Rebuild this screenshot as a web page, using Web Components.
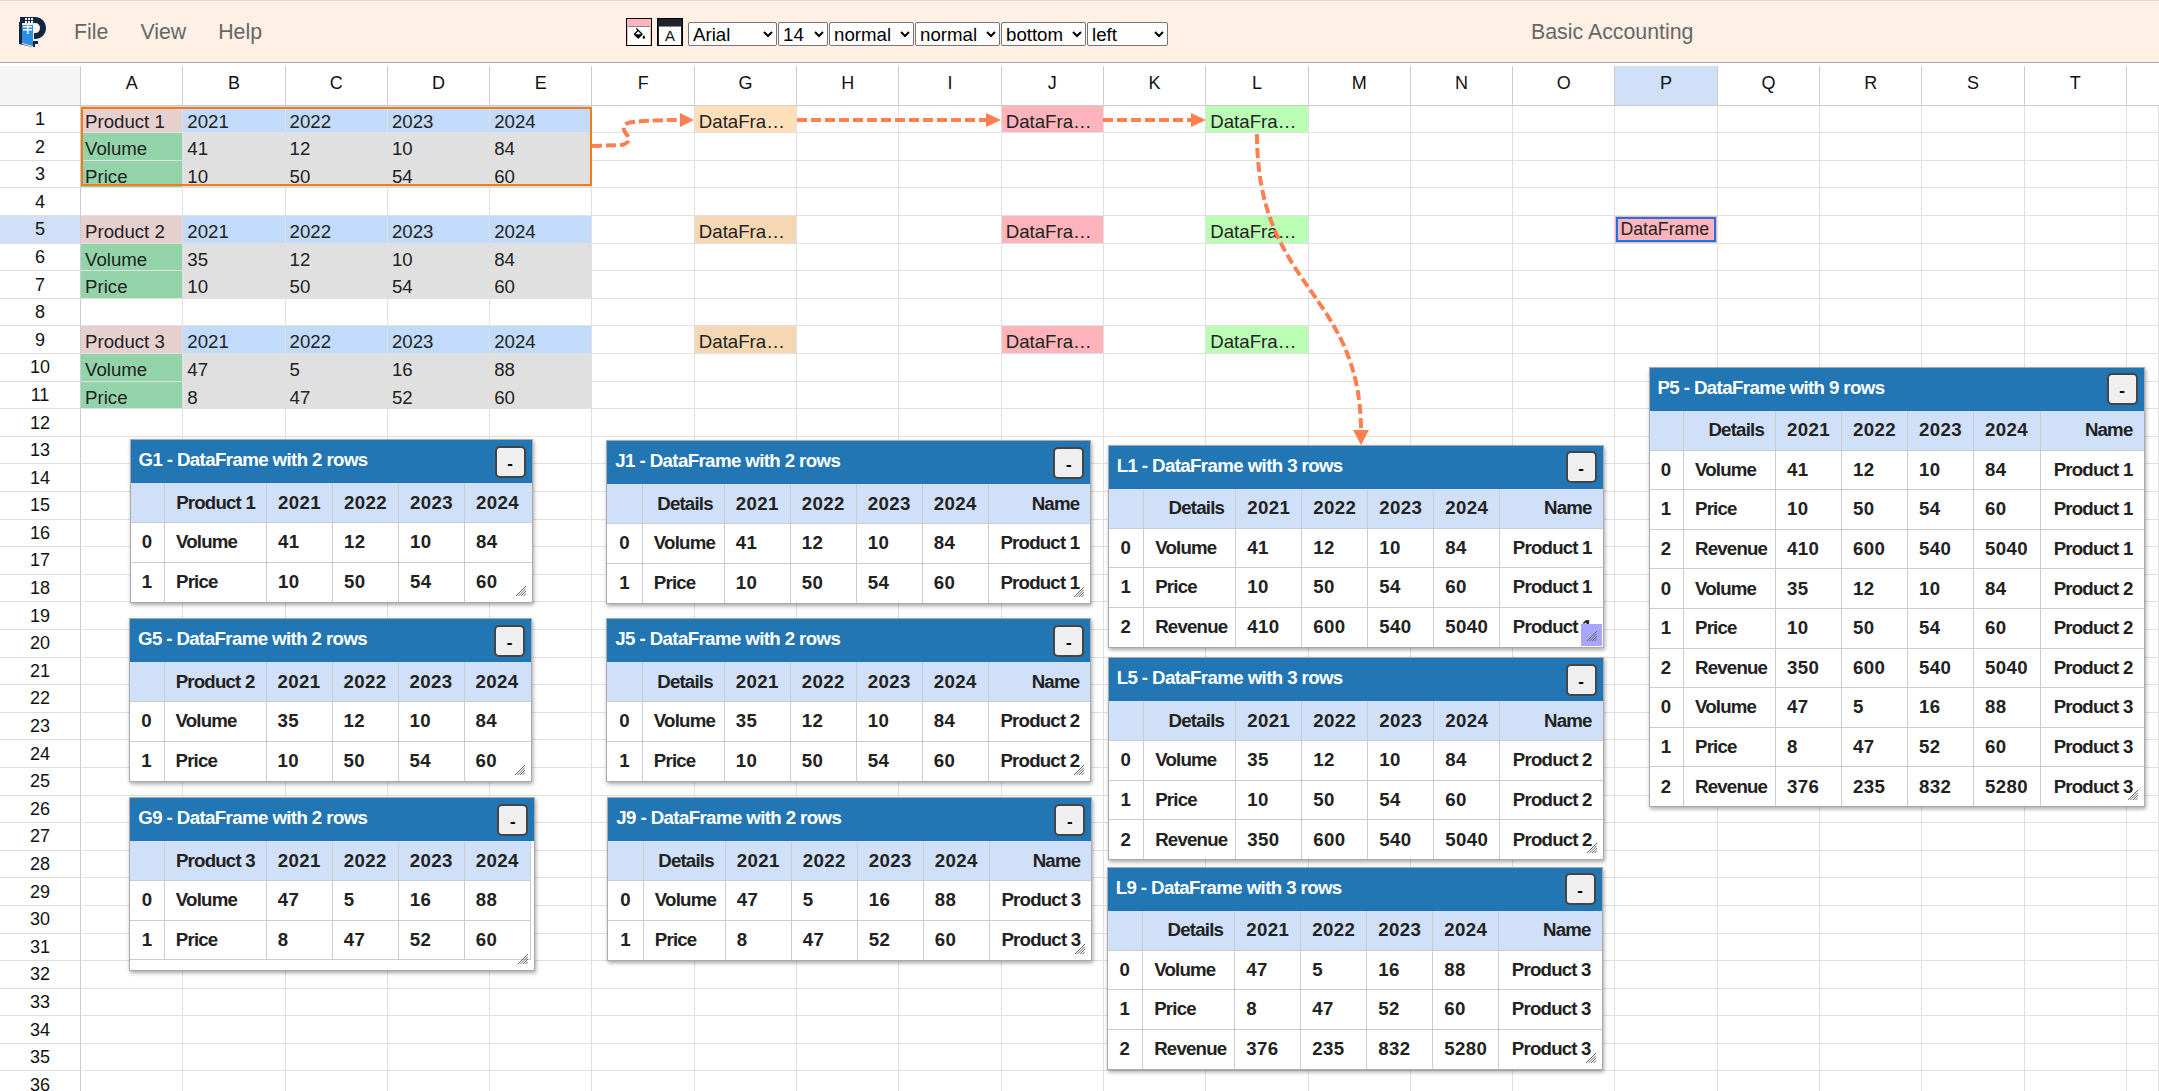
<!DOCTYPE html>
<html>
<head>
<meta charset="utf-8">
<title>Basic Accounting</title>
<style>
html, body { margin: 0; height: 100%; overflow: hidden; background: #fff; }
body { font-family: "Liberation Sans", Arial, sans-serif; color: #222; }
#sheet-area { display: block; position: relative; margin-top: 3px; }
</style>
</head>
<body>
<app-toolbar>Basic Accounting</app-toolbar>
<div id="sheet-area">
  <sheet-grid></sheet-grid>
  <flow-arrows></flow-arrows>
  <df-panel x="129.5" y="373" widths="34,102,66,66,66,67" head=",Product 1,2021,2022,2023,2024" rows="0,Volume,41,12,10,84;1,Price,10,50,54,60">G1 - DataFrame with 2 rows</df-panel>
  <df-panel x="129" y="552" widths="34,102,66,66,66,67" head=",Product 2,2021,2022,2023,2024" rows="0,Volume,35,12,10,84;1,Price,10,50,54,60">G5 - DataFrame with 2 rows</df-panel>
  <df-panel x="129.3" y="731" widths="34,102,66,66,66,66" box="406,174" head=",Product 3,2021,2022,2023,2024" rows="0,Volume,47,5,16,88;1,Price,8,47,52,60">G9 - DataFrame with 2 rows</df-panel>
  <df-panel x="606.3" y="374" widths="35,82,66,66,66,66,102" head=",Details,2021,2022,2023,2024,Name" rows="0,Volume,41,12,10,84,Product 1;1,Price,10,50,54,60,Product 1">J1 - DataFrame with 2 rows</df-panel>
  <df-panel x="606.3" y="552" widths="35,82,66,66,66,66,102" head=",Details,2021,2022,2023,2024,Name" rows="0,Volume,35,12,10,84,Product 2;1,Price,10,50,54,60,Product 2">J5 - DataFrame with 2 rows</df-panel>
  <df-panel x="607.3" y="731" widths="35,82,66,66,66,66,102" head=",Details,2021,2022,2023,2024,Name" rows="0,Volume,47,5,16,88,Product 3;1,Price,8,47,52,60,Product 3">J9 - DataFrame with 2 rows</df-panel>
  <df-panel x="1107.7" y="378.5" active widths="35,92,66,66,66,66,103" head=",Details,2021,2022,2023,2024,Name" rows="0,Volume,41,12,10,84,Product 1;1,Price,10,50,54,60,Product 1;2,Revenue,410,600,540,5040,Product 1">L1 - DataFrame with 3 rows</df-panel>
  <df-panel x="1107.7" y="591" widths="35,92,66,66,66,66,103" head=",Details,2021,2022,2023,2024,Name" rows="0,Volume,35,12,10,84,Product 2;1,Price,10,50,54,60,Product 2;2,Revenue,350,600,540,5040,Product 2">L5 - DataFrame with 3 rows</df-panel>
  <df-panel x="1106.7" y="800.5" widths="35,92,66,66,66,66,103" head=",Details,2021,2022,2023,2024,Name" rows="0,Volume,47,5,16,88,Product 3;1,Price,8,47,52,60,Product 3;2,Revenue,376,235,832,5280,Product 3">L9 - DataFrame with 3 rows</df-panel>
  <df-panel x="1648.5" y="300.5" widths="34,92,66,66,66,67,103" head=",Details,2021,2022,2023,2024,Name" rows="0,Volume,41,12,10,84,Product 1;1,Price,10,50,54,60,Product 1;2,Revenue,410,600,540,5040,Product 1;0,Volume,35,12,10,84,Product 2;1,Price,10,50,54,60,Product 2;2,Revenue,350,600,540,5040,Product 2;0,Volume,47,5,16,88,Product 3;1,Price,8,47,52,60,Product 3;2,Revenue,376,235,832,5280,Product 3">P5 - DataFrame with 9 rows</df-panel>
</div>

<script>
class AppToolbar extends HTMLElement {
    constructor() {
        super();
        const selects = [
            ['Arial', 89], ['14', 50], ['normal', 85], ['normal', 85], ['bottom', 85], ['left', 81]
        ].map(([v, w]) => `<select style="width:${w}px"><option>${v}</option></select>`).join('');
        this.attachShadow({ mode: 'open' }).innerHTML = `
        <style>
        :host {
            display: grid;
            grid-template-columns: 626px 905px 1fr;
            align-items: center;
            height: 61px;
            background: #fef0e5;
            border-top: 1px solid #ddd;
            border-bottom: 1px solid #aaa;
            font-family: "Liberation Sans", Arial, sans-serif;
        }
        .left { display: flex; align-items: center; padding-left: 19px; }
        .logo { width: 27px; height: 30px; margin-right: 28px; }
        .menu { display: flex; gap: 32px; font-size: 21.33px; color: #666; padding-top: 1px; }
        .tools { display: flex; align-items: center; }
        .swatch {
            box-sizing: border-box; width: 26px; height: 28px; margin-right: 5px;
            border: 1px solid #000; padding: 7px 1px 0; display: flex;
        }
        .swatch.fill { background: #ffb3ba; }
        .swatch.text { background: #212529; }
        .swatch div {
            flex: 1; background: #fff; border-top: 1px solid #888;
            display: flex; align-items: center; justify-content: center;
            font-size: 15px; line-height: 1; color: #111;
        }
        .swatch svg { width: 15px; height: 15px; }
        select {
            height: 24px; margin: 4px 1px 0 0; padding: 0; box-sizing: border-box;
            font: 18.67px "Liberation Sans", Arial, sans-serif; color: #000;
            background: #fff; border: 1px solid #767676; border-radius: 2px;
        }
        .title { font-size: 21.33px; color: #666; padding-top: 1px; }
        </style>
        <div class="left">
            <svg class="logo" viewBox="0 0 27 30">
                <path fill="#10273f" d="M1 0h15c6 0 11 4.500 11 11s-5 11-11 11h-1v-6h1c3 0 5-2 5-5s-2-5-5-5H1z"/>
                <path fill="#10273f" d="M0 5h3v22l11 3v-6h5v3h-3v3h-3L0 27z"/>
                <path fill="#2a8fe0" d="M3 8h11v21L3 26z"/>
                <path fill="#fff" d="M6 1h2v2H6zM9 1h2v2H9zM12 1h2v2h-2zM6 4h2v2H6zM9 4h2v2H9zM12 4h2v2h-2zM4 9h9v1.500H4zM4 12h9v1.500H4zM8 8h1.500v9H8z"/>
                <path fill="#fff" d="M14 8h3c1.500 0 3 1 3 3s-1.500 3-3 3h-3v-1.500h3c.8 0 1.500-.5 1.500-1.500S17.800 9.500 17 9.500h-3z"/>
            </svg>
            <nav class="menu"><span>File</span><span>View</span><span>Help</span></nav>
        </div>
        <div class="tools">
            <div class="swatch fill"><div><svg viewBox="0 0 24 24"><path d="M19,11.5C19,11.5 17,13.67 17,15A2,2 0 0,0 19,17A2,2 0 0,0 21,15C21,13.67 19,11.5 19,11.5M5.21,10L10,5.21L14.79,10M16.56,8.94L7.62,0L6.21,1.41L8.59,3.79L3.44,8.94C2.85,9.5 2.85,10.47 3.44,11.06L8.94,16.56C9.23,16.85 9.62,17 10,17C10.38,17 10.77,16.85 11.06,16.56L16.56,11.06C17.15,10.47 17.15,9.5 16.56,8.94Z"/></svg></div></div>
            <div class="swatch text"><div>A</div></div>
            ${selects}
        </div>
        <div class="title"><slot></slot></div>`;
    }
}

// cell contents of the visible sheet, keyed by column letter + row number
const SHEET = {};
function fillBlock(row, name, years, vals) {
    const cols = ['B', 'C', 'D', 'E'];
    SHEET['A' + row] = [name, 'name'];
    SHEET['A' + (row + 1)] = ['Volume', 'green'];
    SHEET['A' + (row + 2)] = ['Price', 'green'];
    cols.forEach((c, i) => {
        SHEET[c + row] = [years[i], 'blue'];
        SHEET[c + (row + 1)] = [vals[0][i], 'gray'];
        SHEET[c + (row + 2)] = [vals[1][i], 'gray'];
    });
    SHEET['G' + row] = ['DataFrame', row === 1 ? 'peach' : 'peach2'];
    SHEET['J' + row] = ['DataFrame', 'pink'];
    SHEET['L' + row] = ['DataFrame', 'lime'];
}
const YEARS = [2021, 2022, 2023, 2024];
fillBlock(1, 'Product 1', YEARS, [[41, 12, 10, 84], [10, 50, 54, 60]]);
fillBlock(5, 'Product 2', YEARS, [[35, 12, 10, 84], [10, 50, 54, 60]]);
fillBlock(9, 'Product 3', YEARS, [[47, 5, 16, 88], [8, 47, 52, 60]]);

class SheetGrid extends HTMLElement {
    constructor() {
        super();
        const letters = 'ABCDEFGHIJKLMNOPQRST'.split('');
        let html = '<div class="corner"></div>';
        letters.forEach(l => { html += `<div class="colhead ${l === 'P' ? 'on' : ''}">${l}</div>`; });
        html += '<div class="colhead blank"></div>';
        for (let r = 1; r <= 36; r++) {
            html += `<div class="rowhead ${r === 5 ? 'on' : ''}">${r}</div>`;
            letters.forEach(l => {
                const c = SHEET[l + r];
                html += c ? `<div class="cell ${c[1]}">${c[0]}</div>` : '<div class="cell"></div>';
            });
            html += '<div class="cell"></div>';
        }
        this.attachShadow({ mode: 'open' }).innerHTML = `
        <style>
        :host {
            display: grid;
            grid-template-columns: 81px repeat(20, 102.3px) 1fr;
            grid-template-rows: 39.7px repeat(36, 27.6px);
            font: 18.67px "Liberation Sans", Arial, sans-serif;
            color: #222;
        }
        .corner { background: #f5f5f5; border-bottom: 1px solid #ccc; border-right: 1px solid #ccc; }
        .colhead, .rowhead {
            display: flex; align-items: center; justify-content: center;
            box-sizing: border-box; background: #fff; font-size: 18px; color: #111;
        }
        .colhead { border-right: 1px solid #ccc; border-bottom: 1px solid #ccc; padding-bottom: 4px; }
        .colhead.blank { border-right: 0; }
        .rowhead { border-right: 1px solid #ccc; border-bottom: 1px solid #ddd; padding-top: 1px; }
        .on { background: #d0e0f8; }
        .cell {
            box-sizing: border-box; overflow: hidden; white-space: nowrap; text-overflow: ellipsis;
            border-right: 1px solid #e0e0e0; border-bottom: 1px solid #e0e0e0;
            padding: 4px 10px 0 4px; line-height: 24px;
        }
        .name { background: #e6cfcf; }
        .blue { background: #c2dbfb; }
        .green { background: #93d3a9; }
        .gray { background: #e0e0e0; }
        .peach { background: #ffdfba; }
        .peach2 { background: #f6d7b3; }
        .pink { background: #ffb3ba; }
        .lime { background: #baffb4; }
        .selection {
            position: absolute; left: 80.5px; top: 40.5px; width: 507px; height: 75px;
            border: 2px solid #f57c14; pointer-events: none;
        }
        .editor {
            position: absolute; left: 1615.5px; top: 150.5px; width: 93px; height: 21px;
            border: 2px solid #1a73e8; background: #ffb3ba;
            font-size: 17.7px; line-height: 21px; padding-left: 3px; box-shadow: 0 0 0 1px #ffb3ba;
        }
        </style>
        ${html}
        <div class="selection"></div>
        <div class="editor">DataFrame</div>`;
    }
}

class FlowArrows extends HTMLElement {
    constructor() {
        super();
        const C = '#ff7f50';
        this.attachShadow({ mode: 'open' }).innerHTML = `
        <style>
        :host { position: absolute; left: 0; top: 0; width: 2159px; height: 500px; pointer-events: none; }
        svg { display: block; }
        path.l { fill: none; stroke: ${C}; stroke-width: 4; stroke-dasharray: 10 4; }
        polygon { fill: ${C}; }
        </style>
        <svg width="2159" height="500" viewBox="0 66 2159 500">
            <path class="l" d="M592 146L622 145Q632 142 627 135Q620 126 628 123Q640 120 682 120"/>
            <polygon points="680,113 694,120 680,127"/>
            <path class="l" d="M797 120H988"/>
            <polygon points="986,113 1001,120 986,127"/>
            <path class="l" d="M1103 120H1194"/>
            <polygon points="1191,113 1206,120 1191,127"/>
            <path class="l" d="M1257 134C1257 290 1361 290 1361 432"/>
            <polygon points="1353,430 1361,445 1369,430"/>
        </svg>`;
    }
}

class DfPanel extends HTMLElement {
    constructor() {
        super();
        const widths = this.getAttribute('widths').split(',');
        const head = this.getAttribute('head').split(',');
        const rows = this.getAttribute('rows').split(';').map(r => r.split(','));
        const total = widths.reduce((a, b) => a + Number(b), 0);
        const box = this.getAttribute('box');
        const size = box ? box.split(',') : [total + 2, null];
        this.style.left = this.getAttribute('x') + 'px';
        this.style.top = this.getAttribute('y') + 'px';
        this.style.width = size[0] + 'px';
        if (size[1]) this.style.height = size[1] + 'px';

        const cls = (i, v, isHead) => {
            let a = 'l';
            if (i === 0) a = 'c';
            else if (i === 1 && isHead) a = 'r';
            else if (head[i] === 'Name') a = 'r';
            return a + (/^\d+$/.test(v) ? ' n' : '');
        };
        const cols = widths.map(w => `<col style="width:${w}px">`).join('');
        const ths = head.map((h, i) => `<th class="${cls(i, h, true)}">${h}</th>`).join('');
        const trs = rows.map(r => '<tr>' + r.map((v, i) => `<td class="${cls(i, v)}">${v}</td>`).join('') + '</tr>').join('');

        this.attachShadow({ mode: 'open' }).innerHTML = `
        <style>
        :host {
            position: absolute; display: block; box-sizing: border-box;
            background: #fff; border: 1px solid #aaa;
            box-shadow: 1px 2px 4px rgba(0,0,0,.35);
            font: bold 18.67px "Liberation Sans", Arial, sans-serif; color: #222;
        }
        header {
            display: flex; align-items: center; justify-content: space-between;
            height: 43px; background: #2176b3; color: #fff; padding: 0 6px 0 8px;
            letter-spacing: -.6px;
        }
        header span { padding-bottom: 3px; }
        button {
            width: 31px; height: 32px; padding: 4px 0 0; box-sizing: border-box;
            border: 2px solid #444; border-radius: 5px; background: #efefef;
            font: bold 17px "Liberation Sans", Arial, sans-serif; color: #000;
        }
        table { border-collapse: collapse; table-layout: fixed; width: ${total}px; }
        th, td {
            padding: 0 11px; height: 39.6px; box-sizing: border-box; border: 1px solid #ccc;
            white-space: nowrap; overflow: hidden; letter-spacing: -.8px;
        }
        tr > :first-child { border-left: 0; padding: 0; }
        tr > :last-child { border-right: 0; }
        tr:last-child td { border-bottom: 0; }
        :host([box]) tr > :last-child { border-right: 1px solid #ccc; }
        :host([box]) tr:last-child td { border-bottom: 1px solid #ccc; }
        th { background: #d0e0f8; border-top: 0; }
        .n { letter-spacing: .4px; }
        .c { text-align: center; }
        .l { text-align: left; }
        .r { text-align: right; }
        .grip { position: absolute; right: 1px; bottom: 1px; width: 21px; height: 22px; display: flex; align-items: flex-end; justify-content: flex-end; }
        :host([active]) .grip { background: #a9a6ff; }
        .grip svg { width: 10px; height: 10px; margin: 0 5px 5px 0; }
        </style>
        <header><span><slot></slot></span><button>-</button></header>
        <table><colgroup>${cols}</colgroup><thead><tr>${ths}</tr></thead><tbody>${trs}</tbody></table>
        <div class="grip"><svg viewBox="0 0 10 10"><path stroke="#666" stroke-width="1" d="M10 0L0 10M10 2.500L2.500 10M10 5L5 10M10 7.500L7.500 10"/></svg></div>`;
    }
}

customElements.define('app-toolbar', AppToolbar);
customElements.define('sheet-grid', SheetGrid);
customElements.define('flow-arrows', FlowArrows);
customElements.define('df-panel', DfPanel);
</script>
</body>
</html>
